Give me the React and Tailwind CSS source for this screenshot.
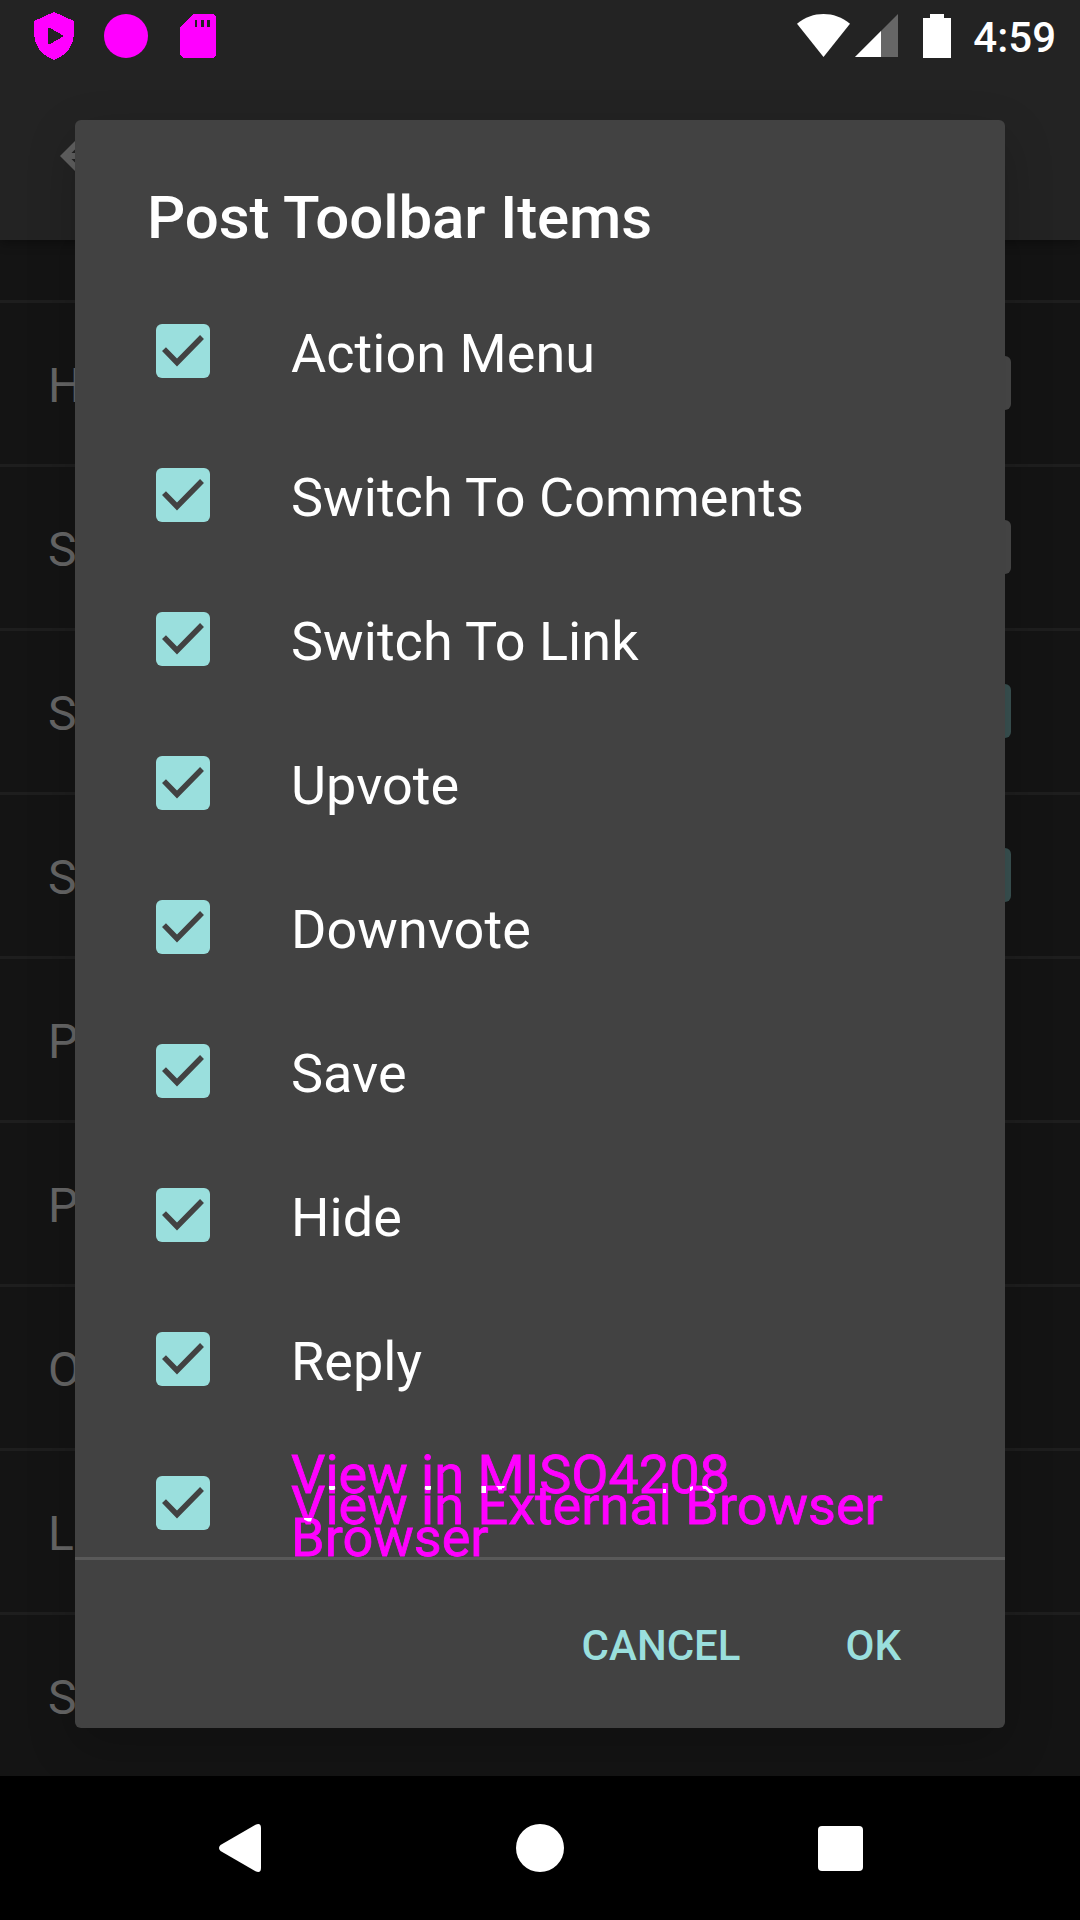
const settings = [
  { label: "H", box: "off" },
  { label: "S", box: "off" },
  { label: "S", box: "on" },
  { label: "S", box: "on" },
  { label: "P" },
  { label: "P" },
  { label: "O" },
  { label: "L" },
  { label: "S" },
];

const items = [
  "Action Menu",
  "Switch To Comments",
  "Switch To Link",
  "Upvote",
  "Downvote",
  "Save",
  "Hide",
  "Reply",
];

function StatusBar() {
  return (
    <header className="flex h-[72px] shrink-0 items-start pl-[34px] pr-6">
      <svg className="mt-3 h-12 w-10" viewBox="0 0 40 48" fill="#f0f" shapeRendering="crispEdges">
        <path fillRule="evenodd" d="M20 0L40 9V22C40 33 32 44 20 48C8 44 0 33 0 22V9ZM14 16V32L16 32L30 24L16 16Z" />
      </svg>
      <div className="ml-[30px] mt-3.5 size-11 rounded-full bg-[#ff00ff]" />
      <svg className="ml-8 mt-3.5 h-11 w-9" viewBox="0 0 36 44" fill="#f0f" shapeRendering="crispEdges">
        <path fillRule="evenodd" d="M13 0H33L36 3V41L33 44H3L0 41V13ZM15 6V13H17V6ZM21 6V13H24V6ZM27 6V13H30V6Z" />
      </svg>
      <svg className="ml-auto mt-3.5 h-[43px] w-[53px]" viewBox="0 0 53 43" fill="#fff">
        <path d="M0 9.7C15.500 -3.200 37.500 -3.200 53 9.700L26.500 43Z" />
      </svg>
      <svg className="ml-[5px] mt-3.5 h-[43px] w-[43px]" viewBox="0 0 43 43">
        <path d="M43 0V43H0Z" fill="#666" />
        <path d="M26 17V43H0Z" fill="#fff" />
      </svg>
      <svg className="ml-[25px] mt-3.5 h-11 w-7" viewBox="0 0 28 44" fill="#fff">
        <path d="M7 0H21V4H28V44H0V4H7Z" />
      </svg>
      <span className="ml-[22px] mt-[13px] text-[42px] font-medium leading-[49px] text-white">4:59</span>
    </header>
  );
}

function Check() {
  return (
    <svg className="mt-9 size-[54px] shrink-0" viewBox="0 0 54 54">
      <rect width="54" height="54" rx="6" fill="#9adfdd" />
      <path d="M8 25.200L21 38.500L46 13" fill="none" stroke="#424242" strokeWidth="5.500" />
    </svg>
  );
}

function Line({ children }) {
  return (
    <div className="h-8 whitespace-nowrap text-[54px] leading-8 text-[#ff00ff] [-webkit-text-stroke:0.8px_#ff00ff] nth-[2]:h-[31px] nth-[2]:leading-[30px]">
      {children}
    </div>
  );
}

function Dialog() {
  return (
    <section className="absolute left-[75px] top-[120px] z-[5] flex h-[1608px] w-[930px] flex-col rounded-[6px] bg-[#424242] text-white shadow-[0_18px_50px_rgba(0,0,0,0.2)]">
      <h1 className="mt-[63px] h-[70px] pl-[72px] text-[60px] font-medium leading-[70px] tracking-[-0.09px]">Post Toolbar Items</h1>
      <ul className="mt-[35px]">
        {items.map((item) => (
          <li key={item} className="flex h-36 items-start pl-[81px]">
            <Check />
            <span className="ml-[81px] mt-[34px] text-[54px] leading-[64px] tracking-[0.04px]">{item}</span>
          </li>
        ))}
        <li className="relative flex h-[117px] items-start pl-[81px]">
          <Check />
          <div className="ml-[81px] mt-[19px]">
            <Line>View in MISO4208</Line>
            <Line>View in External Browser</Line>
            <Line>Browser</Line>
          </div>
          {/* highlights where the stacked lines cross */}
          <svg className="absolute left-[216px] top-[46px] h-10 w-[430px]" viewBox="291 1486 430 40" fill="#fff">
            <path d="M329 1486h6v3l-1 1h-4l-1-1zM425 1486h6v3l-1 1h-4l-1-1zM481.500 1486h4.500v7h-4.500zM496 1486h9l-1 2h-2v1.500h-4v-1.500zM304 1518h8l-1 3.500h-3l-4-2zM663 1489h3v4h-3zM690 1487l3-1v3l-2 2h-1zM702 1486h4l7.500 6v1h-4l-4-4h-2z" />
          </svg>
        </li>
      </ul>
      <div className="h-[3px] shrink-0 bg-[#595959]" />
      <div className="flex justify-end pr-[104px] pt-[61px] text-[42px] font-medium leading-[50px] text-[#9adfdd]">
        <button>CANCEL</button>
        <button className="ml-[105px]">OK</button>
      </div>
    </section>
  );
}

export default function App() {
  return (
    <div className="relative flex h-[1920px] w-[1080px] flex-col overflow-hidden bg-[#141414] font-['Roboto',sans-serif]">
      <div className="z-[1] flex h-60 shrink-0 flex-col bg-[#232323] shadow-[0_3px_10px_rgba(0,0,0,0.35)]">
        <StatusBar />
        <svg className="ml-12 mt-12 size-[72px]" viewBox="0 0 24 24" fill="#606060">
          <path d="M20 11H7.830l5.590-5.590L12 4l-8 8 8 8 1.410-1.410L7.830 13H20v-2z" />
        </svg>
      </div>
      <main className="h-[1536px] shrink-0 overflow-hidden">
        <div className="h-[63px] border-b-[3px] border-[#1e1e1e]" />
        {settings.map(({ label, box }, i) => (
          <div key={i} className="flex h-[164px] items-start justify-between border-b-[3px] border-[#1e1e1e] pl-12 pr-[69px]">
            <span className="mt-[55px] text-[48px] leading-[56px] text-[#666]">{label}</span>
            {box === "off" && <div className="mt-[53px] size-[54px] rounded-[6px] bg-[#4a4a4a]" />}
            {box === "on" && <div className="mt-[53px] size-[54px] rounded-[6px] bg-[#3a5252]" />}
          </div>
        ))}
      </main>
      <Dialog />
      <nav className="z-10 flex h-36 shrink-0 items-center bg-black pl-[219px]">
        <svg className="h-12 w-[42px]" viewBox="0 0 42 48" fill="#fff">
          <path d="M1.500 21L36.500 .8Q42 -1.500 42 4V44Q42 49.500 36.500 47.200L1.500 27Q-1.500 24 1.500 21Z" />
        </svg>
        <div className="ml-[255px] size-12 rounded-full bg-white" />
        <div className="ml-[253.500px] size-[45px] rounded-[4px] bg-white" />
      </nav>
    </div>
  );
}
